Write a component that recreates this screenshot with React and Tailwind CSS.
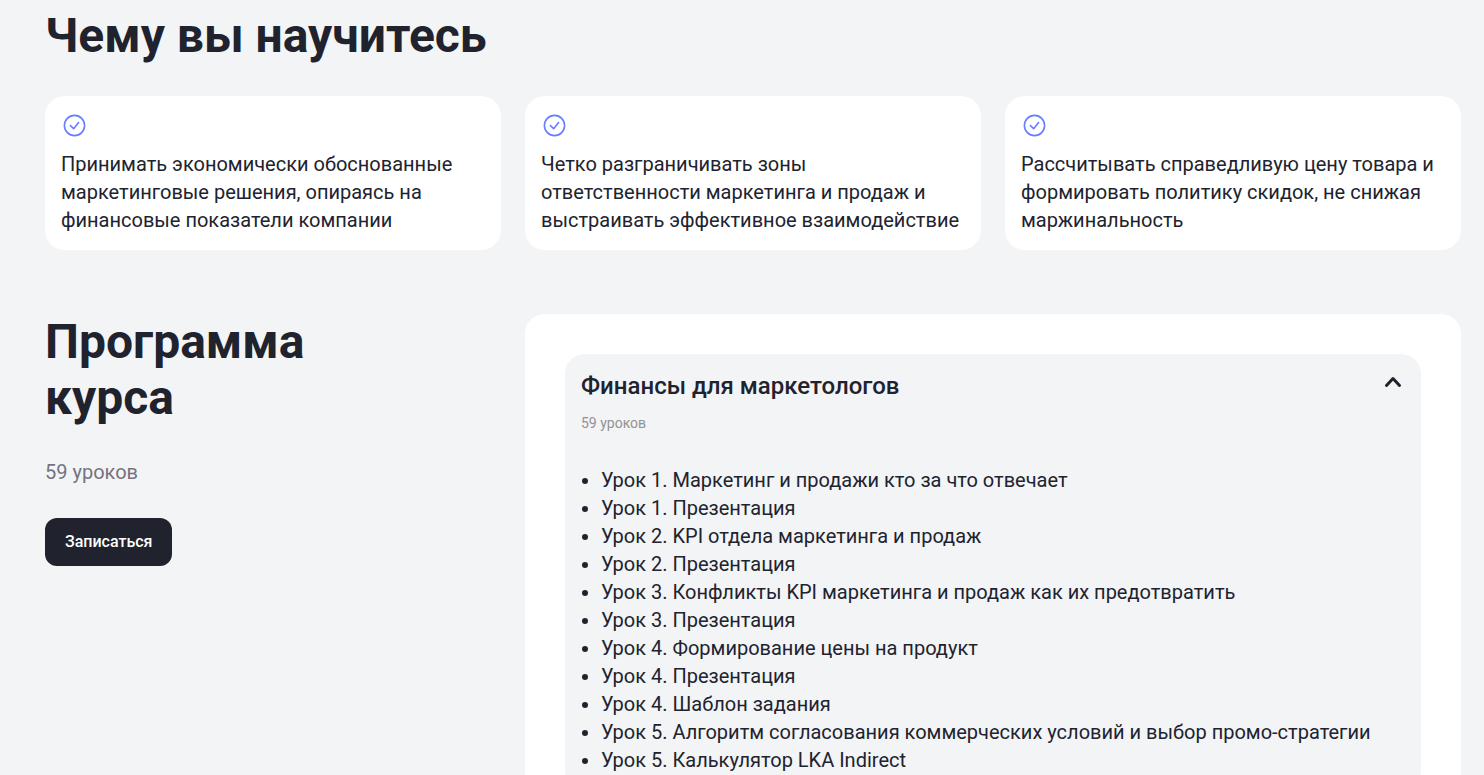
import React, { useState } from "react";

const SKILLS = [
  "Принимать экономически обоснованные маркетинговые решения, опираясь на финансовые показатели компании",
  "Четко разграничивать зоны ответственности маркетинга и продаж и выстраивать эффективное взаимодействие",
  "Рассчитывать справедливую цену товара и формировать политику скидок, не снижая маржинальность",
];

const LESSONS = [
  "Урок 1. Маркетинг и продажи кто за что отвечает",
  "Урок 1. Презентация",
  "Урок 2. KPI отдела маркетинга и продаж",
  "Урок 2. Презентация",
  "Урок 3. Конфликты KPI маркетинга и продаж как их предотвратить",
  "Урок 3. Презентация",
  "Урок 4. Формирование цены на продукт",
  "Урок 4. Презентация",
  "Урок 4. Шаблон задания",
  "Урок 5. Алгоритм согласования коммерческих условий и выбор промо-стратегии",
  "Урок 5. Калькулятор LKA Indirect",
];

function CheckIcon() {
  return (
    <svg
      className="h-7 w-7"
      viewBox="0 0 28 28"
      fill="none"
      stroke="#667eff"
      strokeWidth="1.6"
      strokeLinecap="round"
      strokeLinejoin="round"
      aria-hidden="true"
    >
      <circle cx="13.5" cy="13.5" r="10.1" />
      <path d="M9.5 13.6l3.1 3.2 5-6.2" />
    </svg>
  );
}

function SkillCard({ text }) {
  return (
    <li className="rounded-[20px] bg-white p-4">
      <CheckIcon />
      <p className="mt-2.5 text-xl leading-7">{text}</p>
    </li>
  );
}

function Module({ title, count, lessons }) {
  const [open, setOpen] = useState(true);

  return (
    <div className="rounded-[20px] bg-[#f3f4f6] p-4">
      <button
        type="button"
        aria-expanded={open}
        onClick={() => setOpen(!open)}
        className="flex w-full items-start justify-between text-left"
      >
        <span className="text-2xl font-medium leading-8">{title}</span>
        <svg
          className={open ? "h-6 w-6" : "h-6 w-6 rotate-180"}
          viewBox="0 0 24 24"
          fill="none"
          stroke="currentColor"
          strokeWidth="3"
          strokeLinecap="round"
          strokeLinejoin="round"
          aria-hidden="true"
        >
          <path d="M5.5 15.5l6.5-7 6.5 7" />
        </svg>
      </button>
      <p className="mt-3 text-sm leading-4.5 text-[#929292]">{count}</p>

      {open && (
        <ul className="mt-8.5 list-disc pl-5 text-xl leading-7">
          {lessons.map((lesson) => (
            <li key={lesson}>{lesson}</li>
          ))}
        </ul>
      )}
    </div>
  );
}

export default function App() {
  return (
    <div className="min-h-screen bg-[#f3f4f6] font-[Roboto,sans-serif] text-[#20232e] antialiased">
      <main className="flex flex-col gap-16 pl-[45px] pr-[23px] pt-2">
        <section>
          <h2 className="text-5xl font-bold leading-14">Чему вы научитесь</h2>
          <ul className="mt-8 grid grid-cols-3 gap-6">
            {SKILLS.map((text) => (
              <SkillCard key={text} text={text} />
            ))}
          </ul>
        </section>

        <section className="grid grid-cols-3 gap-6">
          <div>
            <h2 className="max-w-80 text-5xl font-bold leading-14">Программа курса</h2>
            <p className="mt-8 text-xl leading-7 text-[#737380]">59 уроков</p>
            <button
              type="button"
              className="mt-8 h-12 rounded-xl bg-[#20232e] px-5 text-base font-medium text-white"
            >
              Записаться
            </button>
          </div>

          <div className="col-span-2 rounded-[20px] bg-white p-10">
            <Module title="Финансы для маркетологов" count="59 уроков" lessons={LESSONS} />
          </div>
        </section>
      </main>
    </div>
  );
}
